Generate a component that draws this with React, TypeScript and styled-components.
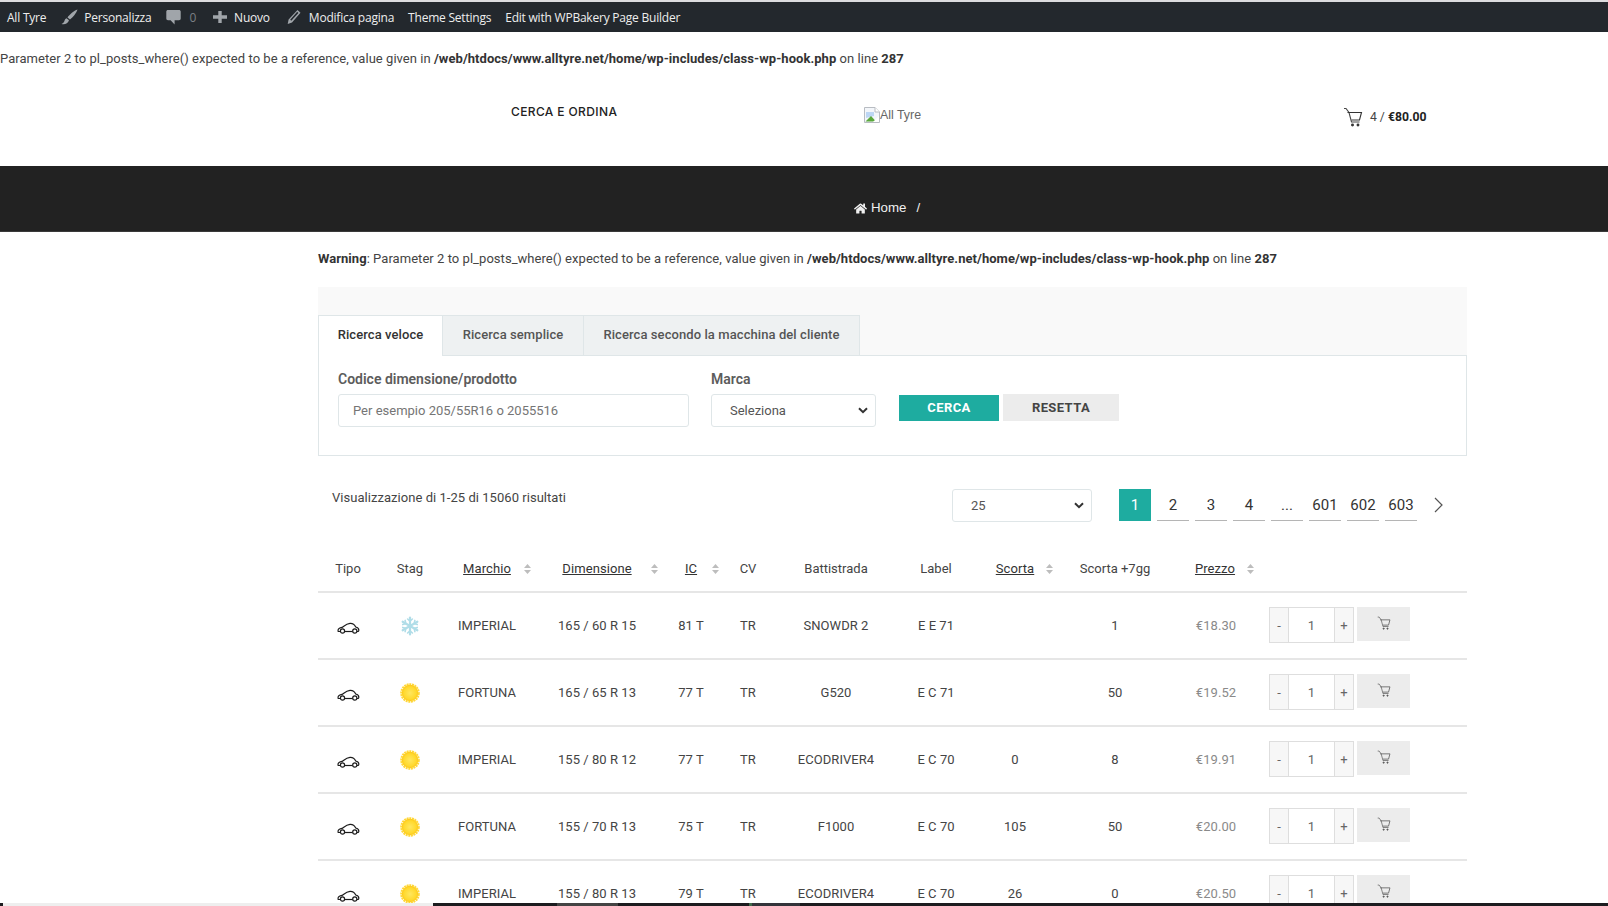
import React from "react";
import styled, { createGlobalStyle } from "styled-components";
import { FaHome } from "react-icons/fa";

const chevronBg = `url("data:image/svg+xml,%3Csvg xmlns='http://www.w3.org/2000/svg' width='10' height='7' viewBox='0 0 10 7'%3E%3Cpath d='M1 1.2 L5 5.2 L9 1.2' fill='none' stroke='%23333' stroke-width='2'/%3E%3C/svg%3E")`;

const Global = createGlobalStyle`
  html, body { margin: 0; padding: 0; background: #fff; }
  body { height: 906px; overflow: hidden; font-family: Roboto, "Liberation Sans", sans-serif; font-size: 14px; color: #444; }
  * { box-sizing: border-box; }
`;

const Page = styled.div`
  position: relative;
  height: 906px;
  overflow: hidden;
  background: #fff;
`;

const AdminBar = styled.div`
  height: 32px;
  border-top: 2px solid #dcdcde;
  background: #23282d;
  display: flex;
  align-items: center;
  padding-left: 7px;
  font-family: "Open Sans", sans-serif;
  font-size: 12px;
  letter-spacing: -0.22px;
  color: #eee;
`;

const AdminItem = styled.span<{ $gap: number }>`
  display: inline-flex;
  align-items: center;
  margin-right: ${(p) => p.$gap}px;
  white-space: nowrap;
`;

const AdminIcon = styled.svg<{ $w: number; $mr: number }>`
  width: ${(p) => p.$w}px;
  height: 16px;
  margin-right: ${(p) => p.$mr}px;
  fill: #a0a5aa;
`;

const Muted = styled.span`
  color: #7b8085;
`;

const Notice = styled.div<{ $left: number; $top: number }>`
  padding-left: ${(p) => p.$left}px;
  padding-top: ${(p) => p.$top}px;
  line-height: 20px;
  font-size: 13px;
  letter-spacing: 0.045px;
  color: #444;
  white-space: nowrap;
  b { font-weight: 700; color: #333; }
`;

const SiteHeader = styled.header`
  height: 97px;
  display: flex;
  align-items: flex-start;
`;

const NavLink = styled.div`
  margin: 35px 0 0 511px;
  width: 353px;
  font-family: Inter, sans-serif;
  font-weight: 500;
  font-size: 12px;
  line-height: 16px;
  letter-spacing: 0.38px;
  color: #222;
`;

const Logo = styled.div`
  margin-top: 38px;
  width: 479px;
  display: flex;
  align-items: center;
  font-family: "Liberation Sans", sans-serif;
  font-size: 12.4px;
  line-height: 16px;
  color: #666;
`;

const Cart = styled.div`
  margin-top: 38px;
  display: flex;
  align-items: center;
  gap: 7px;
  font-size: 12.2px;
  line-height: 20px;
  color: #444;
  b { font-weight: 700; color: #222; }
`;

const Band = styled.div`
  height: 66px;
  background: #222;
  border-bottom: 1px solid #3a3a3a;
  display: flex;
  align-items: flex-end;
  padding: 0 0 13px 854px;
  font-family: "Liberation Sans", sans-serif;
  font-size: 13.3px;
  line-height: 20px;
  color: #f0f0f0;
`;

const HomeLink = styled.span`
  display: inline-flex;
  align-items: center;
  gap: 4px;
  margin-right: 10px;
`;

const Main = styled.main`
  width: 1149px;
  margin-left: 318px;
`;

const SearchPanel = styled.section`
  margin-top: 18px;
  padding-top: 28px;
  background: #f9f9f9;
`;

const Tabs = styled.div`
  display: flex;
  height: 41px;
`;

const Tab = styled.div<{ $active?: boolean; $w: number }>`
  display: flex;
  align-items: center;
  justify-content: center;
  width: ${(p) => p.$w}px;
  padding-bottom: 3px;
  border: 1px solid #dfe6e8;
  border-left-width: ${(p) => (p.$active ? 1 : 0)}px;
  border-bottom: ${(p) => (p.$active ? "none" : "1px solid #dfe6e8")};
  background: ${(p) => (p.$active ? "#fff" : "#eef1f2")};
  font-size: 13px;
  font-weight: 500;
  letter-spacing: 0.08px;
  color: ${(p) => (p.$active ? "#333" : "#555")};
  white-space: nowrap;
`;

const TabLine = styled.div`
  height: 1px;
  margin-left: 125px;
  background: #dfe6e8;
  margin-top: -1px;
`;

const TabBody = styled.div`
  height: 100px;
  padding: 13px 19px 0;
  background: #fff;
  border: 1px solid #dfe6e8;
  border-top: none;
  display: flex;
  align-items: flex-start;
`;

const Field = styled.div<{ $w: number; $mr: number }>`
  width: ${(p) => p.$w}px;
  margin-right: ${(p) => p.$mr}px;
  display: flex;
  flex-direction: column;
`;

const FieldLabel = styled.label`
  font-size: 14px;
  font-weight: 600;
  line-height: 20px;
  color: #5c5c5c;
  margin-bottom: 5px;
`;

const TextInput = styled.input`
  height: 33px;
  width: 100%;
  padding: 0 14px;
  border: 1px solid #dfe6e8;
  border-radius: 3px;
  font-family: Roboto, sans-serif;
  font-size: 13px;
  background: #fff;
  &::placeholder { color: #757575; opacity: 1; }
`;

const Select = styled.select`
  appearance: none;
  height: 33px;
  width: 100%;
  padding: 0 18px;
  border: 1px solid #dfe6e8;
  border-radius: 3px;
  background: #fff ${chevronBg} no-repeat right 7px center;
  font-family: Roboto, sans-serif;
  font-size: 13px;
  color: #555;
`;

const Actions = styled.div`
  display: flex;
  align-items: center;
  gap: 4px;
  margin: 25px 0 0 23px;
`;

const Btn = styled.div<{ $primary?: boolean }>`
  display: flex;
  align-items: center;
  justify-content: center;
  width: ${(p) => (p.$primary ? 100 : 116)}px;
  height: ${(p) => (p.$primary ? 26 : 27)}px;
  background: ${(p) => (p.$primary ? "#1eaca0" : "#ececec")};
  color: ${(p) => (p.$primary ? "#fff" : "#444")};
  font-size: 13px;
  font-weight: 700;
  letter-spacing: 0.4px;
`;

const ResultBar = styled.div`
  height: 66px;
  margin-top: 33px;
  display: flex;
  align-items: flex-start;
`;

const ResultText = styled.div`
  width: 634px;
  padding-left: 14px;
  margin-top: -1px;
  line-height: 20px;
  font-size: 13px;
  letter-spacing: 0.04px;
  color: #444;
`;

const PerPage = styled.div`
  width: 140px;
  margin-right: 27px;
`;

const Pager = styled.nav`
  display: flex;
  gap: 6px;
  align-items: flex-start;
`;

const PageNum = styled.div<{ $active?: boolean }>`
  width: 32px;
  height: 32px;
  display: flex;
  align-items: center;
  justify-content: center;
  font-size: 15px;
  background: ${(p) => (p.$active ? "#1eaca0" : "transparent")};
  color: ${(p) => (p.$active ? "#fff" : "#333")};
  border-bottom: ${(p) => (p.$active ? "none" : "1px solid #b5b5b5")};
`;

const Chevron = styled.svg`
  width: 12px;
  height: 16px;
  margin: 8px 0 0 9px;
  stroke: #555;
  fill: none;
  stroke-width: 1.2;
`;

const COLS = "60px 64px 90px 130px 58px 56px 120px 80px 78px 122px 78px 213px";

const HeadRow = styled.div`
  display: grid;
  grid-template-columns: ${COLS};
  height: 38px;
  padding-top: 4px;
  border-bottom: 2px solid #e6e6e6;
  align-items: start;
`;

const HeadCell = styled.div`
  position: relative;
  text-align: center;
  font-size: 13px;
  line-height: 20px;
  color: #444;
`;

const SortLabel = styled.span`
  text-decoration: underline;
  letter-spacing: 0.08px;
  color: #333;
`;

const SortIcon = styled.svg<{ $right: number }>`
  position: absolute;
  top: 5px;
  right: ${(p) => p.$right}px;
  width: 7px;
  height: 10px;
  fill: #bdbdbd;
`;

const Row = styled.div`
  display: grid;
  grid-template-columns: ${COLS};
  height: 67px;
  border-bottom: 2px solid #e6e6e6;
  align-items: center;
`;

const Cell = styled.div<{ $muted?: boolean }>`
  text-align: center;
  font-size: 13px;
  letter-spacing: 0.05px;
  line-height: 20px;
  color: ${(p) => (p.$muted ? "#8a8a8a" : "#444")};
  white-space: nowrap;
`;

const PriceCell = styled(Cell)`
  padding-left: 2px;
`;

const IconCell = styled.div<{ $drop: number }>`
  display: flex;
  justify-content: center;
  margin-top: ${(p) => p.$drop}px;
`;

const BuyCell = styled.div`
  display: flex;
  gap: 3px;
  align-items: flex-start;
  padding-left: 15px;
  align-self: start;
  margin-top: 14px;
`;

const Stepper = styled.div`
  display: grid;
  grid-template-columns: 18px 1fr 18px;
  width: 85px;
  height: 36px;
  border: 1px solid #dedede;
`;

const StepBtn = styled.div`
  display: flex;
  align-items: center;
  justify-content: center;
  background: #f7f7f7;
  color: #666;
  font-size: 13px;
`;

const StepValue = styled.div`
  display: flex;
  align-items: center;
  justify-content: center;
  border-left: 1px solid #dedede;
  border-right: 1px solid #dedede;
  font-size: 13px;
  color: #666;
`;

const BuyBtn = styled.div`
  width: 53px;
  height: 34px;
  background: #ececec;
  display: flex;
  justify-content: center;
  padding-top: 9px;
`;

const Taskbar = styled.div`
  position: absolute;
  left: 0;
  right: 0;
  bottom: 0;
  height: 3px;
  background: #1c1c1f;
  display: flex;
`;

const Thumb = styled.div<{ $w: number; $ml: number; $bg: string }>`
  width: ${(p) => p.$w}px;
  margin-left: ${(p) => p.$ml}px;
  background: ${(p) => p.$bg};
`;

const CartIcon = ({ size = 20, color = "#444" }: { size?: number; color?: string }) => (
  <svg width={size} height={size} viewBox="0 0 20 20" fill="none" stroke={color} strokeWidth="1.1">
    <path d="M1 1.5 h2 l3 4 l2.5 9.5 h8" opacity="0.9" />
    <path d="M4.5 5.5 H18.5 L16.5 13 H8.5" />
    <circle cx="9.5" cy="18" r="0.9" fill={color} />
    <circle cx="15" cy="18" r="0.9" fill={color} />
  </svg>
);

const Car = () => (
  <svg width="23" height="12" viewBox="0 0 23 12" fill="none" stroke="#1c1c1c" strokeWidth="1.2">
    <path d="M3 9.5 H1.2 C0.6 7.5 1.5 6.3 4 5.7 C6.5 5.2 8 2 13 1.4 C16 1.2 17.5 2.5 18.7 5 C20.5 5.4 22 6.3 21.8 8.3 C21.7 9 21.4 9.5 21 9.5 H20" />
    <path d="M8 9.5 H15.5" />
    <circle cx="5.5" cy="9" r="2.1" />
    <circle cx="17.8" cy="9" r="2.1" />
  </svg>
);

const Snow = () => (
  <svg width="20" height="20" viewBox="0 0 20 20" stroke="#b0dde8" strokeWidth="2.2" fill="none" strokeLinecap="round">
    {[0, 60, 120].map((a) => (
      <g key={a} transform={`rotate(${a} 10 10)`}>
        <path d="M10 1.5 V18.5" />
        <path d="M7.6 3 L10 5.2 L12.4 3 M7.6 17 L10 14.8 L12.4 17" strokeWidth="1.6" />
      </g>
    ))}
  </svg>
);

const Sun = ({ id }: { id: string }) => (
  <svg width="20" height="20" viewBox="0 0 20 20">
    <defs>
      <radialGradient id={id}>
        <stop offset="0%" stopColor="#ffe75e" />
        <stop offset="75%" stopColor="#ffd92e" />
        <stop offset="100%" stopColor="#fdc81a" />
      </radialGradient>
    </defs>
    <circle cx="10" cy="10" r="8.8" fill="none" stroke="#ffd83a" strokeWidth="2" strokeDasharray="2 0.7" />
    <circle cx="10" cy="10" r="8.2" fill={`url(#${id})`} />
  </svg>
);

const Sort = ({ right }: { right: number }) => (
  <SortIcon $right={right} viewBox="0 0 7 10">
    <path d="M3.5 0 L7 4 H0 Z M3.5 10 L0 6 H7 Z" />
  </SortIcon>
);

type Item = { s: "w" | "s"; brand: string; dim: string; ic: string; tread: string; label: string; stock: string; plus: string; price: string };
const rows: Item[] = [
  { s: "w", brand: "IMPERIAL", dim: "165 / 60 R 15", ic: "81 T", tread: "SNOWDR 2", label: "E E 71", stock: "", plus: "1", price: "€18.30" },
  { s: "s", brand: "FORTUNA", dim: "165 / 65 R 13", ic: "77 T", tread: "G520", label: "E C 71", stock: "", plus: "50", price: "€19.52" },
  { s: "s", brand: "IMPERIAL", dim: "155 / 80 R 12", ic: "77 T", tread: "ECODRIVER4", label: "E C 70", stock: "0", plus: "8", price: "€19.91" },
  { s: "s", brand: "FORTUNA", dim: "155 / 70 R 13", ic: "75 T", tread: "F1000", label: "E C 70", stock: "105", plus: "50", price: "€20.00" },
  { s: "s", brand: "IMPERIAL", dim: "155 / 80 R 13", ic: "79 T", tread: "ECODRIVER4", label: "E C 70", stock: "26", plus: "0", price: "€20.50" },
];

export default function App() {
  return (
    <Page>
      <Global />
      <AdminBar>
        <AdminItem $gap={15}>All Tyre</AdminItem>
        <AdminItem $gap={15}>
          <AdminIcon $w={17} $mr={6} viewBox="0 0 17 16">
            <path d="M16.5 0.5 C13 1.5 8.5 5.5 6.5 8.5 L9 10.5 C12 8 15.5 4 16.5 0.5 Z M5.5 9.3 C3.5 9.8 3.8 12 2.8 13.3 C2.2 14 1.4 14.5 0.5 15 C3.5 15.8 7 14.8 8 11.3 Z" />
          </AdminIcon>
          Personalizza
        </AdminItem>
        <AdminItem $gap={17}>
          <AdminIcon $w={15} $mr={8} viewBox="0 0 15 16">
            <path d="M2 1 H13 C14 1 14.7 1.7 14.7 2.6 V9.6 C14.7 10.6 14 11.2 13 11.2 H8.6 V15.5 L4.6 11.2 H2 C1 11.2 0.3 10.6 0.3 9.6 V2.6 C0.3 1.7 1 1 2 1 Z" />
          </AdminIcon>
          <Muted>0</Muted>
        </AdminItem>
        <AdminItem $gap={17}>
          <AdminIcon $w={14} $mr={7} viewBox="0 0 14 16">
            <path d="M5.3 2 H8.7 V6.3 H14 V9.7 H8.7 V14 H5.3 V9.7 H0 V6.3 H5.3 Z" />
          </AdminIcon>
          Nuovo
        </AdminItem>
        <AdminItem $gap={14}>
          <AdminIcon $w={14} $mr={8} viewBox="0 0 14 16">
            <path d="M10.5 1 L13.5 3.7 L5 13.5 L0.7 15 L1.6 10.6 Z M10.2 2.8 L3.2 10.7 L4.3 11.7 L11.4 3.9 Z" fillRule="evenodd" />
          </AdminIcon>
          Modifica pagina
        </AdminItem>
        <AdminItem $gap={14}>Theme Settings</AdminItem>
        <AdminItem $gap={0}>Edit with WPBakery Page Builder</AdminItem>
      </AdminBar>

      <Notice $left={0} $top={17}>
        Parameter 2 to pl_posts_where() expected to be a reference, value given in <b>/web/htdocs/www.alltyre.net/home/wp-includes/class-wp-hook.php</b> on line <b>287</b>
      </Notice>

      <SiteHeader>
        <NavLink>CERCA E ORDINA</NavLink>
        <Logo>
          <svg width="16" height="16" viewBox="0 0 16 16">
            <path d="M0.5 0.5 H11 L15.5 5 V15.5 H0.5 Z" fill="#f3f6fa" stroke="#b8bcc2" />
            <path d="M11 0.5 V5 H15.5" fill="#fff" stroke="#b8bcc2" />
            <path d="M2 5 H10 V9 L2 11 Z" fill="#bcd6f4" />
            <path d="M1.5 14.5 L7 9 L12 14.5 Z" fill="#5aa83c" />
            <path d="M9 15 L15 9 V15 Z" fill="#fff" />
          </svg>
          All Tyre
        </Logo>
        <Cart>
          <CartIcon size={20} color="#333" />
          <span>
            4 / <b>€80.00</b>
          </span>
        </Cart>
      </SiteHeader>

      <Band>
        <HomeLink>
          <FaHome size={13} />
          Home
        </HomeLink>
        /
      </Band>

      <Notice $left={318} $top={17}>
        <b>Warning</b>: Parameter 2 to pl_posts_where() expected to be a reference, value given in <b>/web/htdocs/www.alltyre.net/home/wp-includes/class-wp-hook.php</b> on line <b>287</b>
      </Notice>

      <Main>
        <SearchPanel>
          <Tabs>
            <Tab $active $w={125}>Ricerca veloce</Tab>
            <Tab $w={141}>Ricerca semplice</Tab>
            <Tab $w={276}>Ricerca secondo la macchina del cliente</Tab>
          </Tabs>
          <TabLine />
          <TabBody>
            <Field $w={351} $mr={22}>
              <FieldLabel>Codice dimensione/prodotto</FieldLabel>
              <TextInput placeholder="Per esempio 205/55R16 o 2055516" />
            </Field>
            <Field $w={165} $mr={0}>
              <FieldLabel>Marca</FieldLabel>
              <Select defaultValue="Seleziona">
                <option>Seleziona</option>
              </Select>
            </Field>
            <Actions>
              <Btn $primary>CERCA</Btn>
              <Btn>RESETTA</Btn>
            </Actions>
          </TabBody>
        </SearchPanel>

        <ResultBar>
          <ResultText>Visualizzazione di 1-25 di 15060 risultati</ResultText>
          <PerPage>
            <Select defaultValue="25">
              <option>25</option>
            </Select>
          </PerPage>
          <Pager>
            <PageNum $active>1</PageNum>
            {["2", "3", "4", "...", "601", "602", "603"].map((n) => (
              <PageNum key={n}>{n}</PageNum>
            ))}
            <Chevron viewBox="0 0 12 16">
              <path d="M3 1 L10 8 L3 15" />
            </Chevron>
          </Pager>
        </ResultBar>

        <HeadRow>
          <HeadCell>Tipo</HeadCell>
          <HeadCell>Stag</HeadCell>
          <HeadCell>
            <SortLabel>Marchio</SortLabel>
            <Sort right={1} />
          </HeadCell>
          <HeadCell>
            <SortLabel>Dimensione</SortLabel>
            <Sort right={4} />
          </HeadCell>
          <HeadCell>
            <SortLabel>IC</SortLabel>
            <Sort right={1} />
          </HeadCell>
          <HeadCell>CV</HeadCell>
          <HeadCell>Battistrada</HeadCell>
          <HeadCell>Label</HeadCell>
          <HeadCell>
            <SortLabel>Scorta</SortLabel>
            <Sort right={1} />
          </HeadCell>
          <HeadCell>Scorta +7gg</HeadCell>
          <HeadCell>
            <SortLabel>Prezzo</SortLabel>
            <Sort right={0} />
          </HeadCell>
          <HeadCell />
        </HeadRow>

        {rows.map((r, i) => (
          <Row key={i}>
            <IconCell $drop={5}>
              <Car />
            </IconCell>
            <IconCell $drop={1}>{r.s === "w" ? <Snow /> : <Sun id={`sun${i}`} />}</IconCell>
            <Cell>{r.brand}</Cell>
            <Cell>{r.dim}</Cell>
            <Cell>{r.ic}</Cell>
            <Cell>TR</Cell>
            <Cell>{r.tread}</Cell>
            <Cell>{r.label}</Cell>
            <Cell>{r.stock}</Cell>
            <Cell>{r.plus}</Cell>
            <PriceCell $muted>{r.price}</PriceCell>
            <BuyCell>
              <Stepper>
                <StepBtn>-</StepBtn>
                <StepValue>1</StepValue>
                <StepBtn>+</StepBtn>
              </Stepper>
              <BuyBtn>
                <CartIcon size={14} color="#555" />
              </BuyBtn>
            </BuyCell>
          </Row>
        ))}
      </Main>

      <Taskbar>
        <Thumb $w={430} $ml={3} $bg="#eeeeee" />
        <Thumb $w={61} $ml={124} $bg="#444444" />
        <Thumb $w={3} $ml={131} $bg="#3f6b4a" />
        <Thumb $w={48} $ml={0} $bg="#33343a" />
      </Taskbar>
    </Page>
  );
}
